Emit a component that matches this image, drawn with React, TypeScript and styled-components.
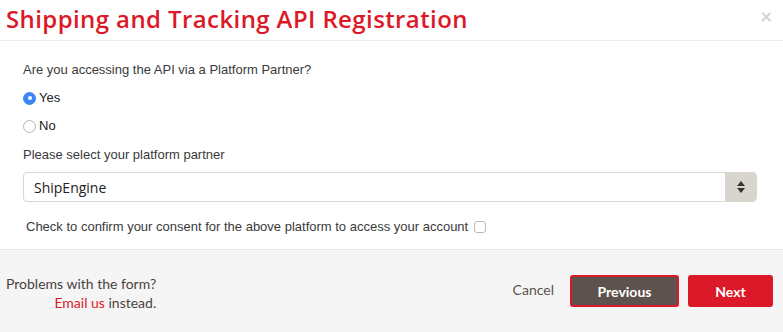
import React from 'react';
import styled, { createGlobalStyle } from 'styled-components';

const GlobalStyle = createGlobalStyle`
  html, body {
    margin: 0;
    padding: 0;
    background: #fff;
  }
  body {
    font-family: "Liberation Sans", Arial, sans-serif;
  }
`;

const Modal = styled.div`
  width: 783px;
  height: 332px;
  display: flex;
  flex-direction: column;
  background: #fff;
  overflow: hidden;
`;

const Header = styled.div`
  height: 41px;
  border-bottom: 1px solid #ececec;
  display: flex;
  align-items: center;
  justify-content: space-between;
  padding: 0 10px 0 6px;
  box-sizing: border-box;
`;

const Title = styled.h1`
  margin: 0;
  font-family: "Open Sans", "Lato", sans-serif;
  font-weight: 600;
  font-size: 24px;
  letter-spacing: 0.4px;
  color: #dc1928;
  margin-top: -3px;
`;

const Close = styled.span`
  color: #d2d2d2;
  font-family: "DejaVu Sans", sans-serif;
  font-weight: 700;
  font-size: 16px;
  margin-top: -8px;
`;

const Body = styled.div`
  flex: 1;
  padding: 20px 26px 0 23px;
  display: flex;
  flex-direction: column;
`;

const Label = styled.div<{ $gap?: number }>`
  font-size: 13px;
  line-height: 18px;
  color: #3a3a3a;
  margin-top: ${(p) => p.$gap ?? 0}px;
`;

const RadioRow = styled.label`
  display: flex;
  align-items: center;
  gap: 3px;
  font-size: 13px;
  line-height: 18px;
  color: #222;
  margin-top: 10px;
`;

const Radio = styled.span<{ $checked?: boolean }>`
  width: 13px;
  height: 13px;
  border-radius: 50%;
  box-sizing: border-box;
  display: inline-flex;
  align-items: center;
  justify-content: center;
  background: ${(p) => (p.$checked ? '#3b86f7' : '#fff')};
  border: 1px solid ${(p) => (p.$checked ? '#3b86f7' : '#b4b4b4')};
  &::after {
    content: '';
    width: 4px;
    height: 4px;
    border-radius: 50%;
    background: #fff;
    display: ${(p) => (p.$checked ? 'block' : 'none')};
  }
`;

const SelectBox = styled.div`
  margin-top: 8px;
  height: 30px;
  border: 1px solid #d9d5cf;
  border-radius: 4px;
  display: flex;
  align-items: stretch;
  box-sizing: border-box;
  overflow: hidden;
`;

const SelectValue = styled.div`
  flex: 1;
  padding-left: 10px;
  display: flex;
  align-items: center;
  font-family: "Open Sans", sans-serif;
  font-size: 14px;
  color: #222;
`;

const SelectArrow = styled.div`
  width: 31px;
  background: #d8d4ce;
  display: flex;
  flex-direction: column;
  align-items: center;
  justify-content: center;
  gap: 2px;
`;

const ConsentRow = styled.label`
  margin-top: 17px;
  padding-left: 3px;
  display: flex;
  align-items: center;
  gap: 6px;
  font-size: 13px;
  color: #3a3a3a;
`;

const Checkbox = styled.span`
  width: 12px;
  height: 12px;
  border: 1px solid #b9b9b9;
  border-radius: 3px;
  box-sizing: border-box;
  background: #fff;
`;

const Footer = styled.div`
  height: 83px;
  background: #f5f5f5;
  border-top: 1px solid #e6e6e6;
  box-sizing: border-box;
  display: flex;
  align-items: center;
  justify-content: space-between;
  padding: 0 10px 0 6px;
`;

const Help = styled.div`
  text-align: right;
  font-family: "Lato", "Open Sans", sans-serif;
  font-size: 14px;
  line-height: 19px;
  color: #4a423f;
  margin-top: 4px;
`;

const HelpLink = styled.a`
  color: #dc1928;
  text-decoration: none;
`;

const Actions = styled.div`
  display: flex;
  align-items: center;
`;

const CancelButton = styled.button`
  background: none;
  border: none;
  font-family: "Lato", "Open Sans", sans-serif;
  font-size: 14px;
  color: #5a524e;
  margin-right: 16px;
  margin-top: -3px;
  padding: 0;
`;

const ActionButton = styled.button<{ $primary?: boolean }>`
  height: 32px;
  min-width: ${(p) => (p.$primary ? '85px' : '109px')};
  border-radius: 3px;
  border: 2px solid #dc1928;
  background: ${(p) => (p.$primary ? '#dc1928' : '#5d524d')};
  color: #fff;
  font-family: "Lato", "Open Sans", sans-serif;
  font-weight: 700;
  font-size: 14px;
  margin-left: ${(p) => (p.$primary ? '9px' : '0')};
`;

export default function App() {
  return (
    <>
      <GlobalStyle />
      <Modal>
        <Header>
          <Title>Shipping and Tracking API Registration</Title>
          <Close>×</Close>
        </Header>
        <Body>
          <Label>Are you accessing the API via a Platform Partner?</Label>
          <RadioRow>
            <Radio $checked />
            Yes
          </RadioRow>
          <RadioRow>
            <Radio />
            No
          </RadioRow>
          <Label $gap={11}>Please select your platform partner</Label>
          <SelectBox>
            <SelectValue>ShipEngine</SelectValue>
            <SelectArrow>
              <svg width="8" height="5" viewBox="0 0 8 5">
                <path d="M4 0 L8 5 L0 5 Z" fill="#3a3230" />
              </svg>
              <svg width="8" height="5" viewBox="0 0 8 5">
                <path d="M0 0 L8 0 L4 5 Z" fill="#3a3230" />
              </svg>
            </SelectArrow>
          </SelectBox>
          <ConsentRow>
            Check to confirm your consent for the above platform to access your account
            <Checkbox />
          </ConsentRow>
        </Body>
        <Footer>
          <Help>
            Problems with the form?
            <br />
            <HelpLink href="#">Email us</HelpLink> instead.
          </Help>
          <Actions>
            <CancelButton>Cancel</CancelButton>
            <ActionButton>Previous</ActionButton>
            <ActionButton $primary>Next</ActionButton>
          </Actions>
        </Footer>
      </Modal>
    </>
  );
}
